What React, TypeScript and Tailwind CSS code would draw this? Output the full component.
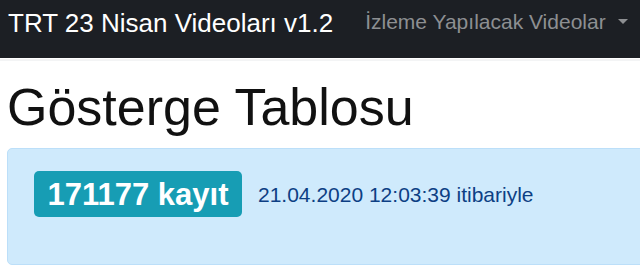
import React from "react";

export default function App() {
  return (
    <div
      className="w-[640px] h-[272px] overflow-hidden bg-white"
      style={{ fontFamily: '"Liberation Sans", Arial, sans-serif' }}
    >
      <div className="w-[720px]">
        <nav className="h-[58px] bg-[#1c1f24] flex items-start pl-[8px]">
          <span className="mt-[8px] text-[26px] leading-[30px] text-white whitespace-nowrap">
            TRT 23 Nisan Videoları v1.2
          </span>
          <span className="mt-[10px] ml-[32px] flex items-center text-[21px] leading-[24px] text-[#8d8f92] whitespace-nowrap">
            İzleme Yapılacak Videolar
            <svg width="10" height="5" viewBox="0 0 10 5" className="ml-[12px] -mt-[2px]">
              <polygon points="0,0 10,0 5,5" fill="#8d8f92" />
            </svg>
          </span>
        </nav>
        <div className="mt-[1px] h-[2px] bg-[#f3f4f5]" />
        <div className="px-[7px]">
          <h1 className="mt-[16px] text-[52px] leading-[60px] text-[#111] whitespace-nowrap">
            Gösterge Tablosu
          </h1>
          <div className="mt-[11px] h-[117px] rounded-[5px] border border-[#bcdff9] bg-[#cfeafc] pt-[22px] pl-[26px]">
            <div className="flex items-center">
              <span className="w-[208px] h-[46px] rounded-[5px] bg-[#179db4] flex items-center justify-center text-white font-bold text-[31px] leading-[31px] whitespace-nowrap">
                171177 kayıt
              </span>
              <span className="ml-[16px] mt-[1px] text-[21px] leading-[24px] text-[#0d3f84] whitespace-nowrap">
                21.04.2020 12:03:39 itibariyle
              </span>
            </div>
          </div>
        </div>
      </div>
    </div>
  );
}
